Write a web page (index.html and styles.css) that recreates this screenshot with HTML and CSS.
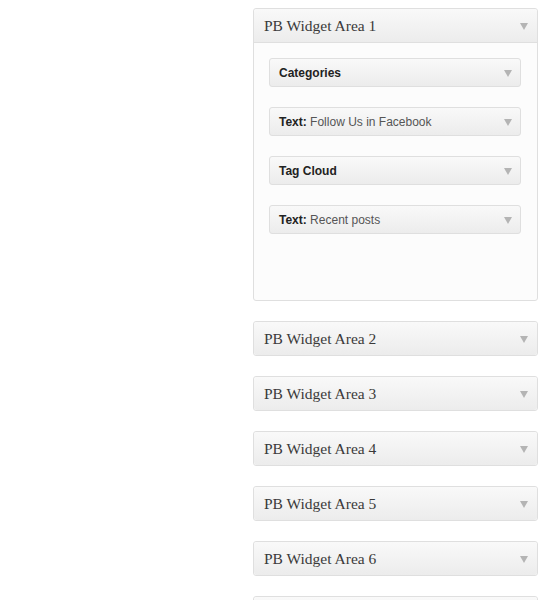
FILE: index.html
```html
<!DOCTYPE html>
<html>
<head>
<meta charset="utf-8">
<link rel="stylesheet" href="styles.css">
</head>
<body>
<div class="sidebars">
  <div class="area open">
    <div class="area-head"><span class="area-title">PB Widget Area 1</span><span class="arrow"></span></div>
    <div class="area-body">
      <div class="widget"><span class="w-title">Categories</span><span class="arrow"></span></div>
      <div class="widget"><span class="w-title">Text:<span class="w-sub"> Follow Us in Facebook</span></span><span class="arrow"></span></div>
      <div class="widget"><span class="w-title">Tag Cloud</span><span class="arrow"></span></div>
      <div class="widget"><span class="w-title">Text:<span class="w-sub"> Recent posts</span></span><span class="arrow"></span></div>
    </div>
  </div>
  <div class="area"><div class="area-head"><span class="area-title">PB Widget Area 2</span><span class="arrow"></span></div></div>
  <div class="area"><div class="area-head"><span class="area-title">PB Widget Area 3</span><span class="arrow"></span></div></div>
  <div class="area"><div class="area-head"><span class="area-title">PB Widget Area 4</span><span class="arrow"></span></div></div>
  <div class="area"><div class="area-head"><span class="area-title">PB Widget Area 5</span><span class="arrow"></span></div></div>
  <div class="area"><div class="area-head"><span class="area-title">PB Widget Area 6</span><span class="arrow"></span></div></div>
  <div class="area"><div class="area-head"><span class="area-title">PB Widget Area 7</span><span class="arrow"></span></div></div>
</div>
</body>
</html>
```
FILE: styles.css
```css
html, body {
  margin: 0;
  padding: 0;
  background: #fff;
  overflow: hidden;
}
.sidebars {
  padding: 8px 0 0 253px;
  display: flex;
  flex-direction: column;
  gap: 20px;
}
.area {
  width: 285px;
  box-sizing: border-box;
  border: 1px solid #dfdfdf;
  border-radius: 3px;
  background: #fcfcfc;
}
.area-head {
  height: 33px;
  box-sizing: border-box;
  display: flex;
  align-items: center;
  justify-content: space-between;
  padding: 0 9px 0 10px;
  background: linear-gradient(to bottom, #f9f9f9, #ececec);
  border-radius: 3px;
}
.open .area-head {
  border-bottom: 1px solid #dfdfdf;
  border-radius: 3px 3px 0 0;
  height: 34px;
}
.area-title {
  font-family: "Liberation Serif", serif;
  font-size: 15.5px;
  color: #3a3a3a;
}
.arrow {
  width: 0;
  height: 0;
  border-left: 4px solid transparent;
  border-right: 4px solid transparent;
  border-top: 7px solid #b4b4b4;
  margin-top: 2px;
}
.area-body {
  padding: 15px 16px 66px 15px;
  display: flex;
  flex-direction: column;
  gap: 20px;
}
.widget {
  height: 29px;
  box-sizing: border-box;
  border: 1px solid #dfdfdf;
  border-radius: 3px;
  background: linear-gradient(to bottom, #f9f9f9, #ececec);
  display: flex;
  align-items: center;
  justify-content: space-between;
  padding: 0 8px 0 9px;
}
.w-title {
  font-family: "Liberation Sans", Arial, sans-serif;
  font-size: 12px;
  font-weight: bold;
  color: #222;
}
.w-sub {
  font-weight: normal;
  color: #555;
}
```
